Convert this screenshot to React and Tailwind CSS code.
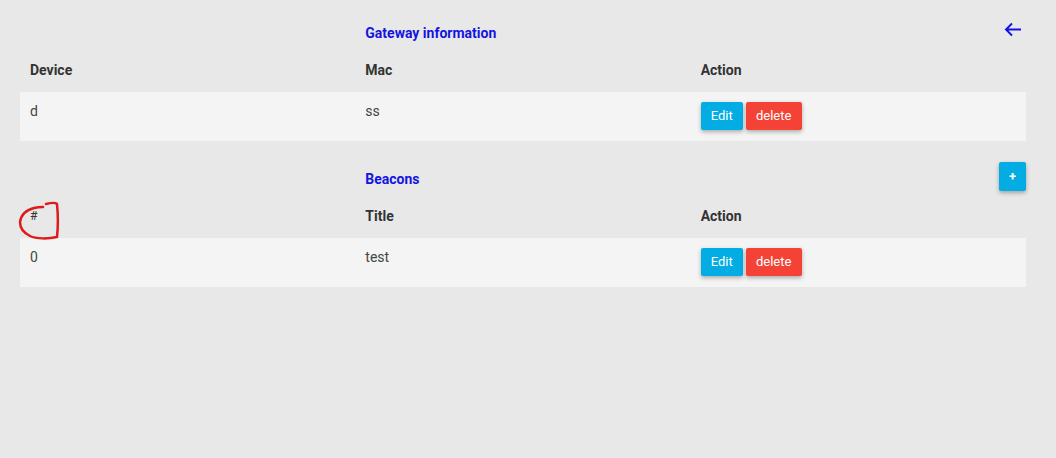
import React from 'react';

const gateways = [{ device: 'd', mac: 'ss' }];
const beacons = [{ id: 0, title: 'test' }];

function ActionButtons() {
  return (
    <div className="flex gap-[3px]">
      <button className="h-[28px] w-[42px] rounded-[2px] bg-[#03ace2] text-[13px] text-white shadow-[0_2px_4px_rgba(0,0,0,0.3)]">
        Edit
      </button>
      <button className="h-[28px] w-[56px] rounded-[2px] bg-[#f44336] text-[13px] text-white shadow-[0_2px_4px_rgba(0,0,0,0.3)]">
        delete
      </button>
    </div>
  );
}

export default function App() {
  return (
    <div className="relative min-h-screen bg-[#e8e8e8] pl-5 pr-[30px] text-[14px] text-[#333] font-['Roboto','Liberation_Sans',sans-serif]">
      {/* GATEWAY */}
      <div className="grid grid-cols-3 pt-[24px]">
        <div />
        <div className="pl-[10px] text-[14px] font-bold leading-[18px] text-[#1414e0]">Gateway information</div>
        <div className="flex justify-end pr-[4px]">
          <svg width="18" height="15" viewBox="0 0 18 15" fill="none" stroke="#1010e8" strokeWidth="1.9" className="-mt-[2px]">
            <path d="M17 7.5H2M8 1.5L2 7.5L8 13.5" />
          </svg>
        </div>
      </div>
      <div className="grid h-[50px] grid-cols-3 items-end pb-[12px] font-bold leading-[20px]">
        <div className="pl-[10px]">Device</div>
        <div className="pl-[10px]">Mac</div>
        <div className="pl-[10px]">Action</div>
      </div>
      {gateways.map((g, i) => (
        <div key={i} className="grid h-[49px] grid-cols-3 items-start bg-[#f4f4f4] pt-[10px] leading-[18px] text-[#444]">
          <div className="pl-[10px]">{g.device}</div>
          <div className="pl-[10px]">{g.mac}</div>
          <div className="pl-[10px]"><ActionButtons /></div>
        </div>
      ))}

      {/* BEACONS */}
      <div className="mt-[21px] grid h-[29px] grid-cols-3">
        <div />
        <div className="pl-[10px] pt-[8px] text-[14px] font-bold leading-[18px] text-[#1414e0]">Beacons</div>
        <div className="flex justify-end">
          <button className="flex h-[29px] w-[27px] items-center justify-center rounded-[2px] bg-[#03ace2] text-[13px] font-bold text-white shadow-[0_2px_4px_rgba(0,0,0,0.3)]">
            +
          </button>
        </div>
      </div>
      <div className="grid h-[47px] grid-cols-3 items-end pb-[12px] leading-[20px]">
        <div className="pl-[10px] text-[12px]">#</div>
        <div className="pl-[10px] font-bold">Title</div>
        <div className="pl-[10px] font-bold">Action</div>
      </div>
      {beacons.map((b) => (
        <div key={b.id} className="grid h-[49px] grid-cols-3 items-start bg-[#f4f4f4] pt-[10px] leading-[18px] text-[#444]">
          <div className="pl-[10px]">{b.id}</div>
          <div className="pl-[10px]">{b.title}</div>
          <div className="pl-[10px]"><ActionButtons /></div>
        </div>
      ))}

      {/* red annotation */}
      <svg className="pointer-events-none absolute left-0 top-0" width="1056" height="458" fill="none">
        <path
          d="M46 204 C50 203 55 202 57 204 C58 214 58 228 57 237 C48 239 36 239 30 236 C24 233 20 228 20 222 C21 215 26 210 34 208 C38 207 41 207 43 207"
          stroke="#e01b1b"
          strokeWidth="2.5"
          strokeLinecap="round"
        />
      </svg>
    </div>
  );
}
